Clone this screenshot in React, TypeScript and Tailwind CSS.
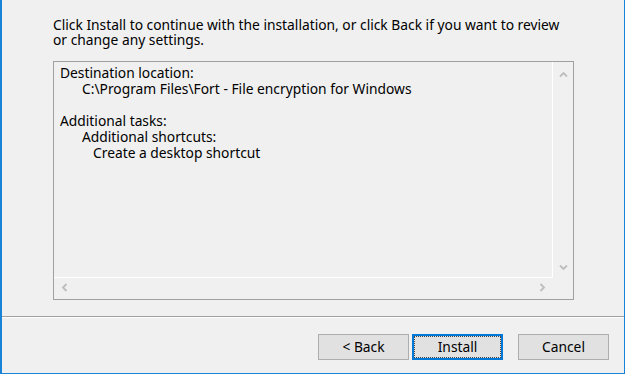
import * as React from "react";

function Chevron({ dir }: { dir: "up" | "down" | "left" | "right" }) {
  const paths: Record<string, string> = {
    up: "M1 5.5 4.5 2 8 5.5",
    down: "M1 2.5 4.5 6 8 2.5",
    left: "M5.5 1 2 4.5 5.5 8",
    right: "M2.5 1 6 4.5 2.5 8",
  };
  return (
    <svg viewBox="0 0 9 9" width="9" height="9" fill="none" stroke="#bdbdbd" strokeWidth="1.8" aria-hidden>
      <path d={paths[dir]} />
    </svg>
  );
}

function Button({ label, primary }: { label: string; primary?: boolean }) {
  return (
    <button
      className={`flex h-[26px] w-[91px] items-center justify-center bg-[#e1e1e1] text-[13.8px] text-black ${
        primary ? "border-2 border-[#0078d7]" : "border border-[#adadad]"
      }`}
    >
      {primary ? (
        <span className="flex h-full w-full items-center justify-center border border-dotted border-[#444]">
          {label}
        </span>
      ) : (
        label
      )}
    </button>
  );
}

export default function App() {
  return (
    <div
      className="h-[376px] w-[628px] bg-white"
      style={{ fontFamily: '"Noto Sans", "Segoe UI", sans-serif' }}
    >
      <div className="flex h-[374px] w-[625px] flex-col border-b border-l-2 border-r border-[#1883d7] bg-[#f0f0f0]">
        {/* wizard page */}
        <div className="h-[316px] pl-[51px] pt-[17px]">
          <p className="text-[13.8px] leading-[15px] text-black">
            Click Install to continue with the installation, or click Back if you want to review
            <br />
            or change any settings.
          </p>

          {/* ready memo */}
          <div className="mt-[14px] grid h-[239px] w-[521px] grid-cols-[1fr_20px] grid-rows-[1fr_21px] border border-[#a0a0a0]">
            <div className="border-b border-r border-white pl-[6px] pt-[3px] text-[13.8px] leading-[16px] text-black">
              <div>Destination location:</div>
              <div className="pl-[22px]">C:\Program Files\Fort - File encryption for Windows</div>
              <div className="h-[16px]" />
              <div>Additional tasks:</div>
              <div className="pl-[22px]">Additional shortcuts:</div>
              <div className="pl-[33px]">Create a desktop shortcut</div>
            </div>
            <div className="flex flex-col items-center justify-between pb-[6px] pt-[9px]">
              <Chevron dir="up" />
              <Chevron dir="down" />
            </div>
            <div className="flex items-center justify-between pb-[2px] pl-[7px] pr-[6px]">
              <Chevron dir="left" />
              <Chevron dir="right" />
            </div>
            <div />
          </div>
        </div>

        <div className="h-px bg-[#a0a0a0]" />
        <div className="h-px bg-white" />

        {/* buttons */}
        <div className="flex justify-end pr-[15px] pt-[16px]">
          <Button label="< Back" />
          <div className="w-[3px]" />
          <Button label="Install" primary />
          <div className="w-[15px]" />
          <Button label="Cancel" />
        </div>
      </div>
    </div>
  );
}
